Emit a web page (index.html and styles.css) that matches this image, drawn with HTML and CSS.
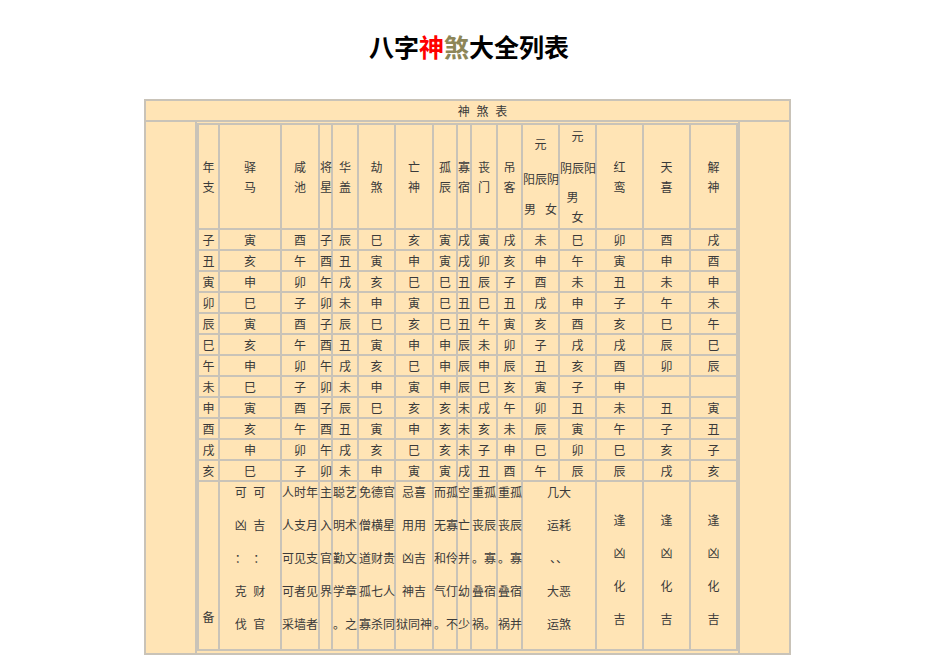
FILE: index.html
```html
<!DOCTYPE html>
<html lang="zh">
<head>
<meta charset="utf-8">
<title>八字神煞大全列表</title>
<link rel="stylesheet" href="styles.css">
</head>
<body>
<div class="page">
  <h1 class="title">八字<span class="red">神</span><span class="olive">煞</span>大全列表</h1>
  <div class="frame">
    <div class="caption">神 煞 表</div>
    <div class="body">
      <div class="side"></div>
      <div class="mid">
        <table class="grid">
          <tr class="head">
            <td class="c1">年<br>支</td>
            <td class="c2">驿<br>马</td>
            <td class="c3">咸<br>池</td>
            <td class="c4">将<br>星</td>
            <td class="c5">华<br>盖</td>
            <td class="c6">劫<br>煞</td>
            <td class="c7">亡<br>神</td>
            <td class="c8">孤<br>辰</td>
            <td class="c9">寡<br>宿</td>
            <td class="c10">丧<br>门</td>
            <td class="c11">吊<br>客</td>
            <td class="c12 yuan1"><div class="l1">元</div><div class="l2">阳辰阴</div><div class="l3"><span>男</span><span>女</span></div></td>
            <td class="c13 yuan2"><div class="l1">元</div><div class="l2">阴辰阳</div><div class="l3">男</div><div class="l4">女</div></td>
            <td class="c14">红<br>鸾</td>
            <td class="c15">天<br>喜</td>
            <td class="c16">解<br>神</td>
          </tr>
          <tr><td>子</td><td>寅</td><td>酉</td><td>子</td><td>辰</td><td>巳</td><td>亥</td><td>寅</td><td>戌</td><td>寅</td><td>戌</td><td>未</td><td>巳</td><td>卯</td><td>酉</td><td>戌</td></tr>
          <tr><td>丑</td><td>亥</td><td>午</td><td>酉</td><td>丑</td><td>寅</td><td>申</td><td>寅</td><td>戌</td><td>卯</td><td>亥</td><td>申</td><td>午</td><td>寅</td><td>申</td><td>酉</td></tr>
          <tr><td>寅</td><td>申</td><td>卯</td><td>午</td><td>戌</td><td>亥</td><td>巳</td><td>巳</td><td>丑</td><td>辰</td><td>子</td><td>酉</td><td>未</td><td>丑</td><td>未</td><td>申</td></tr>
          <tr><td>卯</td><td>巳</td><td>子</td><td>卯</td><td>未</td><td>申</td><td>寅</td><td>巳</td><td>丑</td><td>巳</td><td>丑</td><td>戌</td><td>申</td><td>子</td><td>午</td><td>未</td></tr>
          <tr><td>辰</td><td>寅</td><td>酉</td><td>子</td><td>辰</td><td>巳</td><td>亥</td><td>巳</td><td>丑</td><td>午</td><td>寅</td><td>亥</td><td>酉</td><td>亥</td><td>巳</td><td>午</td></tr>
          <tr><td>巳</td><td>亥</td><td>午</td><td>酉</td><td>丑</td><td>寅</td><td>申</td><td>申</td><td>辰</td><td>未</td><td>卯</td><td>子</td><td>戌</td><td>戌</td><td>辰</td><td>巳</td></tr>
          <tr><td>午</td><td>申</td><td>卯</td><td>午</td><td>戌</td><td>亥</td><td>巳</td><td>申</td><td>辰</td><td>申</td><td>辰</td><td>丑</td><td>亥</td><td>酉</td><td>卯</td><td>辰</td></tr>
          <tr><td>未</td><td>巳</td><td>子</td><td>卯</td><td>未</td><td>申</td><td>寅</td><td>申</td><td>辰</td><td>巳</td><td>亥</td><td>寅</td><td>子</td><td>申</td><td></td><td></td></tr>
          <tr><td>申</td><td>寅</td><td>酉</td><td>子</td><td>辰</td><td>巳</td><td>亥</td><td>亥</td><td>未</td><td>戌</td><td>午</td><td>卯</td><td>丑</td><td>未</td><td>丑</td><td>寅</td></tr>
          <tr><td>酉</td><td>亥</td><td>午</td><td>酉</td><td>丑</td><td>寅</td><td>申</td><td>亥</td><td>未</td><td>亥</td><td>未</td><td>辰</td><td>寅</td><td>午</td><td>子</td><td>丑</td></tr>
          <tr><td>戌</td><td>申</td><td>卯</td><td>午</td><td>戌</td><td>亥</td><td>巳</td><td>亥</td><td>未</td><td>子</td><td>申</td><td>巳</td><td>卯</td><td>巳</td><td>亥</td><td>子</td></tr>
          <tr><td>亥</td><td>巳</td><td>子</td><td>卯</td><td>未</td><td>申</td><td>寅</td><td>寅</td><td>戌</td><td>丑</td><td>酉</td><td>午</td><td>辰</td><td>辰</td><td>戌</td><td>亥</td></tr>
          <tr class="remarks">
            <td class="rm bei"><div class="ln">备</div></td>
            <td class="rm"><div class="ln">可 可</div><div class="ln">凶 吉</div><div class="ln">： ：</div><div class="ln">克 财</div><div class="ln">伐 官</div></td>
            <td class="rm"><div class="ln">人时年</div><div class="ln">人支月</div><div class="ln">可见支</div><div class="ln">可者见</div><div class="ln">采墙者</div></td>
            <td class="rm"><div class="ln">主</div><div class="ln">入</div><div class="ln">官</div><div class="ln">界</div><div class="ln"></div></td>
            <td class="rm"><div class="ln">聪艺</div><div class="ln">明术</div><div class="ln">勤文</div><div class="ln">学章</div><div class="ln">。之</div></td>
            <td class="rm"><div class="ln">免德官</div><div class="ln">僧横星</div><div class="ln">道财贵</div><div class="ln">孤七人</div><div class="ln">寡杀同</div></td>
            <td class="rm"><div class="ln">忌喜</div><div class="ln">用用</div><div class="ln">凶吉</div><div class="ln">神吉</div><div class="ln">狱同神</div></td>
            <td class="rm"><div class="ln">而孤</div><div class="ln">无寡</div><div class="ln">和伶</div><div class="ln">气仃</div><div class="ln">。不</div></td>
            <td class="rm"><div class="ln">空</div><div class="ln">亡</div><div class="ln">并</div><div class="ln">幼</div><div class="ln">少</div></td>
            <td class="rm"><div class="ln">重孤</div><div class="ln">丧辰</div><div class="ln">。寡</div><div class="ln">叠宿</div><div class="ln">祸。</div></td>
            <td class="rm"><div class="ln">重孤</div><div class="ln">丧辰</div><div class="ln">。寡</div><div class="ln">叠宿</div><div class="ln">祸并</div></td>
            <td class="rm" colspan="2"><div class="ln">几大</div><div class="ln">运耗</div><div class="ln">、、</div><div class="ln">大恶</div><div class="ln">运煞</div></td>
            <td class="rm mid4"><div class="ln">逢</div><div class="ln">凶</div><div class="ln">化</div><div class="ln">吉</div></td>
            <td class="rm mid4"><div class="ln">逢</div><div class="ln">凶</div><div class="ln">化</div><div class="ln">吉</div></td>
            <td class="rm mid4"><div class="ln">逢</div><div class="ln">凶</div><div class="ln">化</div><div class="ln">吉</div></td>
          </tr>
        </table>
      </div>
      <div class="side"></div>
    </div>
  </div>
</div>
</body>
</html>
```

FILE: styles.css
```css
html, body {
  margin: 0;
  padding: 0;
  background: #ffffff;
}

body {
  font-family: "Noto Sans CJK SC", "Noto Sans", sans-serif;
  font-size: 12px;
  color: #3a3a3a;
  word-spacing: 4px;
}

.page {
  width: 935px;
  padding-top: 28px;
}

.title {
  margin: 0;
  padding-left: 3px;
  text-align: center;
  font-size: 25px;
  line-height: 36px;
  font-weight: bold;
  color: #000000;
  word-spacing: 0;
}

.red { color: #ff0000; }
.olive { color: #8d8658; }

.frame {
  width: 647px;
  box-sizing: border-box;
  margin: 35px 0 0 144px;
  border: 1px solid #c9c3b8;
  background: #ffe4b5;
}

.caption {
  height: 21px;
  box-sizing: border-box;
  border: 1px solid #c9c3b8;
  line-height: 19px;
  text-align: center;
  padding-left: 30px;
}

.body {
  display: flex;
}

.side {
  width: 51px;
  box-sizing: border-box;
  border: 1px solid #c9c3b8;
}

.mid {
  width: 543px;
  box-sizing: border-box;
  border: 1px solid #c9c3b8;
  padding: 1px 0 2px;
}

.grid {
  width: 541px;
  box-sizing: border-box;
  table-layout: fixed;
  border-collapse: separate;
  border-spacing: 0;
  border: 1px solid #c9c3b8;
  background: #ffe4b5;
}

.grid td {
  box-sizing: border-box;
  border: 1px solid #c9c3b8;
  padding: 0;
  height: 21px;
  line-height: 19px;
  text-align: center;
  vertical-align: middle;
  white-space: nowrap;
  overflow: visible;
}

.c1 { width: 21px; }
.c2 { width: 62px; }
.c3 { width: 38px; }
.c4 { width: 13px; }
.c5 { width: 26px; }
.c6 { width: 37px; }
.c7 { width: 38px; }
.c8 { width: 24px; }
.c9 { width: 14px; }
.c10 { width: 26px; }
.c11 { width: 25px; }
.c12 { width: 37px; }
.c13 { width: 37px; }
.c14 { width: 47px; }
.c15 { width: 47px; }
.c16 { width: 47px; }

.grid .head td {
  height: 105px;
  line-height: 20px;
}

.yuan1 .l1 { margin-bottom: 15px; }
.yuan1 .l2 { margin-bottom: 10px; }
.yuan1 .l3 {
  display: flex;
  justify-content: space-between;
  padding: 0 1px;
}

.yuan2 .l1 { margin-bottom: 12px; }
.yuan2 .l2 { margin-bottom: 9px; }
.yuan2 .l3 { padding-right: 10px; }

.grid .remarks td {
  height: 169px;
  vertical-align: top;
  padding-top: 2px;
}

.ln {
  height: 33px;
  line-height: 16.5px;
}

.grid .remarks td.bei { padding-top: 127px; }
.grid .remarks td.mid4 { padding-top: 30px; }
```
